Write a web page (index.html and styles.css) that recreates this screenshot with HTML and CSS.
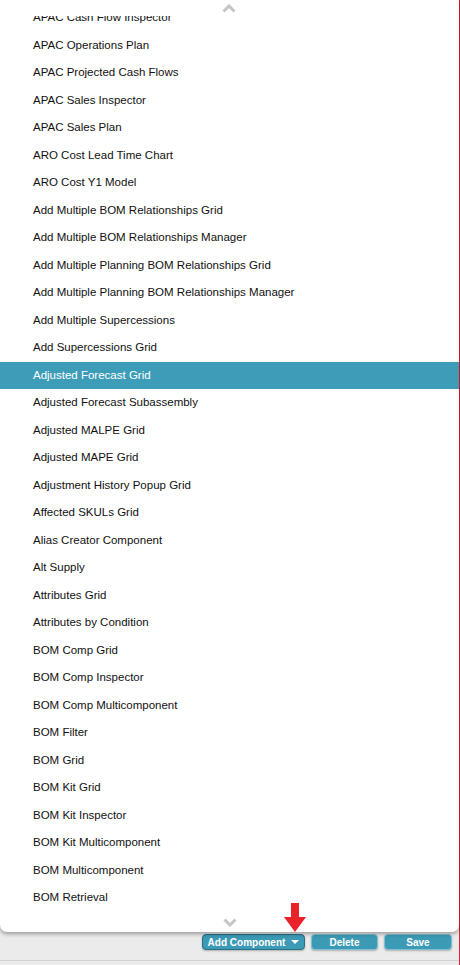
FILE: index.html
```html
<!DOCTYPE html>
<html>
<head>
<meta charset="utf-8">
<link rel="stylesheet" href="styles.css">
</head>
<body>
<div class="frame">
  <div class="popup">
    <div class="scroll-btn scroll-up">
      <svg width="14" height="9" viewBox="0 0 14 9"><polyline points="1.5,7.5 7,2 12.5,7.5" fill="none" stroke="#c6c6c6" stroke-width="3"/></svg>
    </div>
    <div class="viewport">
      <ul class="list">
        <li>APAC Cash Flow Inspector</li>
        <li>APAC Operations Plan</li>
        <li>APAC Projected Cash Flows</li>
        <li>APAC Sales Inspector</li>
        <li>APAC Sales Plan</li>
        <li>ARO Cost Lead Time Chart</li>
        <li>ARO Cost Y1 Model</li>
        <li>Add Multiple BOM Relationships Grid</li>
        <li>Add Multiple BOM Relationships Manager</li>
        <li>Add Multiple Planning BOM Relationships Grid</li>
        <li>Add Multiple Planning BOM Relationships Manager</li>
        <li>Add Multiple Supercessions</li>
        <li>Add Supercessions Grid</li>
        <li class="selected">Adjusted Forecast Grid</li>
        <li>Adjusted Forecast Subassembly</li>
        <li>Adjusted MALPE Grid</li>
        <li>Adjusted MAPE Grid</li>
        <li>Adjustment History Popup Grid</li>
        <li>Affected SKULs Grid</li>
        <li>Alias Creator Component</li>
        <li>Alt Supply</li>
        <li>Attributes Grid</li>
        <li>Attributes by Condition</li>
        <li>BOM Comp Grid</li>
        <li>BOM Comp Inspector</li>
        <li>BOM Comp Multicomponent</li>
        <li>BOM Filter</li>
        <li>BOM Grid</li>
        <li>BOM Kit Grid</li>
        <li>BOM Kit Inspector</li>
        <li>BOM Kit Multicomponent</li>
        <li>BOM Multicomponent</li>
        <li>BOM Retrieval</li>
      </ul>
    </div>
    <div class="scroll-btn scroll-down">
      <svg width="14" height="9" viewBox="0 0 14 9"><polyline points="1.5,1.5 7,7 12.5,1.5" fill="none" stroke="#c6c6c6" stroke-width="3"/></svg>
    </div>
  </div>
  <div class="toolbar">
    <button class="btn btn-add">Add Component <span class="caret"></span></button>
    <button class="btn btn-delete">Delete</button>
    <button class="btn btn-save">Save</button>
  </div>
  <svg class="annotation" width="24" height="30" viewBox="0 0 24 30"><polygon points="8,0 16,0 16,14 23,14 12,29 1,14 8,14" fill="#e8212a"/></svg>
</div>
</body>
</html>
```

FILE: styles.css
```css
* { box-sizing: border-box; }
html, body { margin: 0; padding: 0; }
body {
  width: 460px;
  height: 965px;
  overflow: hidden;
  background: #f4f4f4;
  font-family: "Liberation Sans", Arial, sans-serif;
}
.frame {
  position: relative;
  width: 460px;
  height: 965px;
  border-right: 1px solid #d8222c;
  background: #ebebeb;
  display: flex;
  flex-direction: column;
}
.popup {
  height: 932px;
  background: #ffffff;
  border-radius: 0 0 7px 7px;
  box-shadow: 0 2px 4px rgba(0, 0, 0, 0.35);
  display: flex;
  flex-direction: column;
  position: relative;
  z-index: 1;
}
.scroll-btn {
  display: flex;
  justify-content: center;
  flex: none;
}
.scroll-up {
  height: 16px;
  padding-top: 4px;
  padding-right: 2px;
}
.scroll-down {
  height: 21px;
  padding-top: 7px;
}
.viewport {
  flex: 1;
  overflow: hidden;
}
.list {
  list-style: none;
  margin: -12px 0 0 0;
  padding: 0;
}
.list li {
  height: 27.5px;
  line-height: 27.5px;
  padding-left: 33px;
  font-size: 11.5px;
  color: #111111;
  white-space: nowrap;
}
.list li.selected {
  background: #3d9db9;
  color: #ffffff;
}
.toolbar {
  height: 29px;
  display: flex;
  justify-content: flex-end;
  align-items: flex-start;
  gap: 6px;
  padding: 2px 7px 0 0;
  border-bottom: 1px solid #d2d2d2;
}
.btn {
  height: 16px;
  border: 1px solid #2f8099;
  border-radius: 4px;
  background: #3b9bb6;
  color: #ffffff;
  font-family: "Liberation Sans", Arial, sans-serif;
  font-weight: bold;
  font-size: 10px;
  padding: 0;
  display: flex;
  align-items: center;
  justify-content: center;
  box-shadow: 0 1px 2px rgba(0, 0, 0, 0.25);
}
.btn-add { width: 103px; border-color: #2a6f84; gap: 6px; }
.btn-delete { width: 67px; border-color: #7fc0d2; }
.btn-save { width: 68px; border-color: #7fc0d2; }
.caret {
  width: 0;
  height: 0;
  border-left: 4px solid transparent;
  border-right: 4px solid transparent;
  border-top: 4px solid #ffffff;
}
.annotation {
  position: absolute;
  left: 283px;
  top: 903px;
  z-index: 2;
}
```
